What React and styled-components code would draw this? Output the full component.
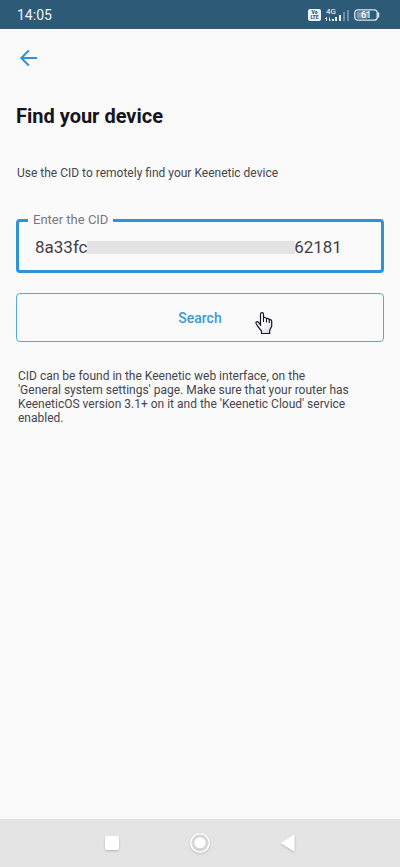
import React, { useState } from 'react'
import styled, { createGlobalStyle } from 'styled-components'

const CID_START = '8a33fc'
const CID_END = '62181'

export default () => {
  const [cid, setCid] = useState(CID_START + ' '.repeat(49) + CID_END)

  return (
    <Screen>
      <GlobalStyle />
      <StatusBar>
        <Clock>14:05</Clock>
        <StatusIcons>
          <VolteIcon />
          <SignalIcon />
          <BatteryIcon />
        </StatusIcons>
      </StatusBar>
      <Content>
        <BackButton type="button" aria-label="Back">
          <ArrowIcon />
        </BackButton>
        <Title>Find your device</Title>
        <Intro>Use the CID to remotely find your Keenetic device</Intro>
        <Field>
          <Legend>
            <label htmlFor="cid">Enter the CID</label>
          </Legend>
          <InputWrap>
            <Input id="cid" value={cid} onChange={e => setCid(e.target.value)} />
            <Mask />
          </InputWrap>
        </Field>
        <SearchButton type="button">
          Search
          <Pointer />
        </SearchButton>
        <Hint>
          CID can be found in the Keenetic web interface, on the
          <br />
          'General system settings' page. Make sure that your router has KeeneticOS version 3.1+ on it
          and the 'Keenetic Cloud' service enabled.
        </Hint>
      </Content>
      <NavBar>
        <NavButton type="button" aria-label="Recent apps">
          <svg width="24" height="24" viewBox="0 0 24 24">
            <rect x="5" y="5" width="14" height="14" rx="2" fill="#fff" />
          </svg>
        </NavButton>
        <NavButton type="button" aria-label="Home">
          <svg width="24" height="24" viewBox="0 0 24 24">
            <circle cx="12" cy="12" r="9.2" fill="none" stroke="#fff" strokeWidth="1.5" />
            <circle cx="12" cy="12" r="5.6" fill="#fff" />
          </svg>
        </NavButton>
        <NavButton type="button" aria-label="Back to previous app">
          <svg width="24" height="24" viewBox="0 0 24 24">
            <path d="M4.5 12 18.5 3.2v17.6z" fill="#fff" />
          </svg>
        </NavButton>
      </NavBar>
    </Screen>
  )
}

const VolteIcon = () => (
  <svg width="13" height="12" viewBox="0 0 13 12">
    <rect width="13" height="12" rx="2" fill="#eef5f9" />
    <g fill="#2c5a77" fontFamily="Roboto, sans-serif" fontWeight="900" fontSize="5" textAnchor="middle">
      <text x="6.5" y="5.3">Vo</text>
      <text x="6.5" y="10.4">LTE</text>
    </g>
  </svg>
)

const SignalIcon = () => (
  <svg width="25" height="14" viewBox="0 0 25 14">
    <text x="1" y="6" fill="#fff" fontFamily="Roboto, sans-serif" fontSize="8">
      4G
    </text>
    <path d="M1.5 13V9.5M.2 10.8 1.5 9.5M4.5 9.5V13M5.8 11.7 4.5 13" stroke="#e3edf3" fill="none" />
    <path d="M7 11h2v2H7zM10 9h2v4h-2zM14 7h2v6h-2z" fill="#f2f7fa" />
    <path d="M18 4h2v9h-2zM22 2h2v11h-2z" fill="#6d8ea3" />
  </svg>
)

const BatteryIcon = () => (
  <svg width="26" height="12" viewBox="0 0 26 12">
    <rect x=".8" y=".8" width="22.4" height="10.4" rx="3" fill="none" stroke="#dce8ef" strokeWidth="1.3" />
    <rect x="2.6" y="2.6" width="11.4" height="6.8" rx="1.4" fill="#7f9bad" />
    <path d="M24.5 4v4" stroke="#dce8ef" strokeWidth="1.5" strokeLinecap="round" />
    <text x="12" y="9" fill="#fff" fontFamily="Roboto, sans-serif" fontWeight="500" fontSize="9" textAnchor="middle">
      61
    </text>
  </svg>
)

const ArrowIcon = () => (
  <svg width="24" height="24" viewBox="0 0 24 24" fill="none" stroke="#2e94d4" strokeWidth="2">
    <path d="M21 12H5.5M12.8 4.5 5.3 12l7.5 7.5" />
  </svg>
)

const GlobalStyle = createGlobalStyle`
  *, *::before, *::after {
    box-sizing: border-box;
  }
  body {
    margin: 0;
    background: #fafafa;
    font-family: Roboto, "Liberation Sans", sans-serif;
    color: #45454d;
  }
`
const Screen = styled.div`
  display: flex;
  flex-direction: column;
  min-height: 100vh;
`
const StatusBar = styled.header`
  display: flex;
  align-items: center;
  justify-content: space-between;
  height: 29px;
  padding: 0 20px 0 17px;
  background: #2c5a77;
`
const Clock = styled.span`
  color: #f0f6fa;
  font-size: 14px;
  line-height: 16px;
`
const StatusIcons = styled.div`
  display: flex;
  align-items: center;
  gap: 4px;
`
const Content = styled.main`
  flex: 1;
  display: flex;
  flex-direction: column;
  align-items: stretch;
  padding: 17px 16px;
`
const BackButton = styled.button`
  display: flex;
  align-self: flex-start;
  padding: 0;
  border: 0;
  background: none;
  cursor: pointer;
`
const Title = styled.h1`
  margin: 34px 0 0;
  color: #15151d;
  font-size: 20px;
  font-weight: 700;
  line-height: 24px;
`
const Intro = styled.p`
  margin: 38px 0 0;
  padding-left: 1px;
  font-size: 12px;
  line-height: 14px;
`
const Field = styled.fieldset`
  min-width: 0;
  margin: 33px 0 0;
  padding: 3px 13px 6px;
  border: 3px solid #2e94d4;
  border-radius: 4px;
`
const Legend = styled.legend`
  margin-left: -4px;
  padding: 0 5px;
  color: #77777c;
  font-size: 13px;
  line-height: 14px;
`
const InputWrap = styled.div`
  position: relative;
`
const Input = styled.input`
  display: block;
  width: 100%;
  height: 34px;
  padding: 0 3px;
  border: 0;
  outline: 0;
  background: none;
  color: #3f3f48;
  font: 17px Roboto, sans-serif;
`
const Mask = styled.span`
  position: absolute;
  top: 11px;
  left: 55px;
  width: 208px;
  height: 13px;
  background: #e4e4e4;
`
const SearchButton = styled.button`
  position: relative;
  height: 49px;
  margin-top: 20px;
  border: 1px solid #55aadb;
  border-radius: 4px;
  background: none;
  color: #3a9ad6;
  font: 500 14px Roboto, sans-serif;
  cursor: pointer;
`
const PointerSvg = styled.svg`
  position: absolute;
  top: 18px;
  left: calc(50% + 55px);
`
const Pointer = () => (
  <PointerSvg width="18" height="23" viewBox="0 0 18 23">
    <defs>
      <linearGradient id="hand" x1="0" y1="0" x2="1" y2="1">
        <stop offset=".5" stopColor="#fff" />
        <stop offset="1" stopColor="#d0d0d0" />
      </linearGradient>
    </defs>
    <path
      d="M5.5 14V2.2C5.5.2 8.5.2 8.5 2.2V6c.8-1 2.7-.6 3 .9.8-.8 2.5-.4 2.8.9 1-.6 2.4.1 2.4 1.5v5l-2 4v3.2H6.5v-2.6L2.8 14.5 1 11.2c-.4-1.5 1.3-2 2.4-1l2.1 2.6"
      fill="url(#hand)"
      stroke="#14142b"
      strokeWidth="1.2"
      strokeLinejoin="round"
    />
    <path d="M8.5 5.5V10M11.5 6.5v4M14.3 7.5V11" stroke="#14142b" strokeWidth="1.1" />
  </PointerSvg>
)
const Hint = styled.p`
  margin: 27px 27px 0 2px;
  font-size: 12px;
  line-height: 14px;
`
const NavBar = styled.nav`
  display: flex;
  justify-content: center;
  align-items: center;
  gap: 64px;
  height: 48px;
  background: #e4e4e4;
`
const NavButton = styled.button`
  display: flex;
  padding: 0;
  border: 0;
  background: none;
  filter: drop-shadow(0 1px 1px #0003);
  cursor: pointer;
`
